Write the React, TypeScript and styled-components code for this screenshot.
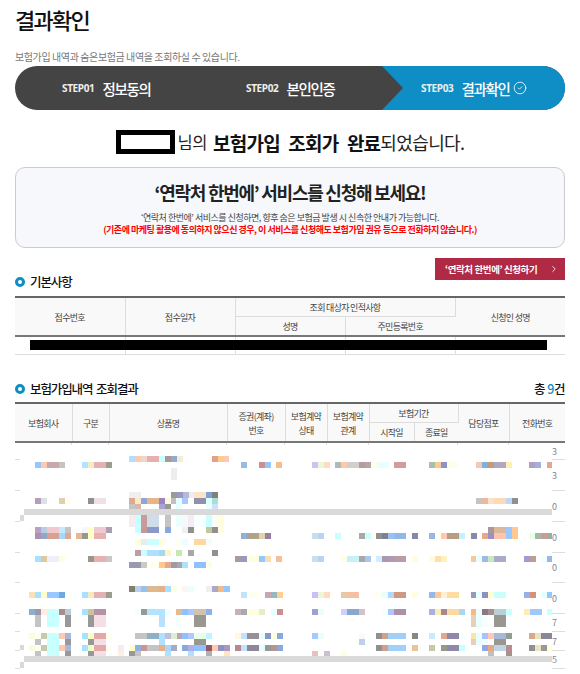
import React from 'react'
import styled, { createGlobalStyle } from 'styled-components'
import { CircleCheck, ChevronRight } from 'lucide-react'

const GlobalStyle = createGlobalStyle`
  html, body {
    margin: 0;
    padding: 0;
    background: #fff;
    overflow: hidden;
  }
  body {
    font-family: "Noto Sans CJK KR", "Noto Sans", sans-serif;
    color: #222;
  }
`

const Page = styled.div`
  width: 550px;
  height: 674px;
  padding: 0 15px;
  overflow: hidden;
`

const Title = styled.h1`
  margin: 0;
  padding-top: 4px;
  height: 45px;
  box-sizing: border-box;
  font-size: 22px;
  line-height: 30px;
  font-weight: 500;
  letter-spacing: -1.7px;
  color: #111;
`

const Subtitle = styled.p`
  margin: 0;
  height: 21px;
  padding-top: 2px;
  box-sizing: border-box;
  font-size: 10px;
  line-height: 20px;
  letter-spacing: -0.4px;
  color: #777;
`

const StepBar = styled.div`
  display: flex;
  height: 44px;
  border-radius: 22px;
  overflow: hidden;
  background: #444;
  color: #fff;
`

const Step = styled.div<{ $width: number; $pad: number; $active?: boolean }>`
  position: relative;
  display: flex;
  align-items: center;
  gap: 8px;
  box-sizing: border-box;
  width: ${({ $width }) => $width}px;
  padding-left: ${({ $pad }) => $pad}px;
  background: ${({ $active }) => ($active ? '#0f8dc5' : 'transparent')};

  ${({ $active }) =>
    $active &&
    `
    &::before {
      content: '';
      position: absolute;
      left: 0;
      top: 0;
      border-left: 21px solid #444;
      border-top: 22px solid transparent;
      border-bottom: 22px solid transparent;
    }
  `}
`

const StepNo = styled.span`
  font-family: "Noto Sans", sans-serif;
  font-size: 10px;
  font-weight: 700;
  letter-spacing: -0.35px;
  color: #eee;
`

const StepName = styled.span`
  font-size: 14.5px;
  font-weight: 500;
  letter-spacing: -1.3px;
`

const StepIcon = styled(CircleCheck)`
  margin-left: -5px;
`

const Notice = styled.div`
  display: flex;
  align-items: center;
  justify-content: center;
  box-sizing: border-box;
  height: 57px;
  padding-top: 7px;
  font-size: 18px;
  letter-spacing: -0.6px;
  color: #222;
`

const Redacted = styled.span`
  display: inline-block;
  box-sizing: border-box;
  width: 59px;
  height: 24px;
  margin-right: 3px;
  background: #fff;
  border: 5px solid #000;
`

const Possessive = styled.span`
  font-size: 16.5px;
  letter-spacing: -0.4px;
  margin-right: 6px;
`

const Strong = styled.b`
  font-size: 19px;
  font-weight: 700;
  letter-spacing: -0.8px;
  word-spacing: 5px;
  color: #111;
`

const PromoBox = styled.div`
  box-sizing: border-box;
  height: 81px;
  border: 1px solid #ccc;
  border-radius: 10px;
  background: #f7f8fc;
  text-align: center;
  padding-top: 10px;
`

const PromoTitle = styled.div`
  font-size: 18px;
  line-height: 28px;
  font-weight: 700;
  letter-spacing: -1.25px;
  color: #222;
`

const PromoText = styled.div`
  margin-top: 6px;
  font-size: 9px;
  line-height: 12px;
  letter-spacing: -0.48px;
  color: #444;
`

const PromoWarn = styled(PromoText)`
  margin-top: 0;
  font-weight: 700;
  letter-spacing: -0.49px;
  color: #f00;
`

const ApplyRow = styled.div`
  display: flex;
  justify-content: flex-end;
  margin-top: 10px;
  height: 22px;
`

const ApplyButton = styled.button`
  display: flex;
  align-items: center;
  width: 130px;
  height: 22px;
  padding: 0 0 0 10px;
  border: 0;
  background: #b02a45;
  color: #fff;
  font-family: inherit;
  font-size: 9.5px;
  font-weight: 700;
  letter-spacing: -0.4px;
  white-space: nowrap;
`

const ApplyArrow = styled(ChevronRight)`
  margin-left: auto;
  margin-right: 6px;
`

const SectionHead = styled.div<{ $gap: number; $height: number }>`
  display: flex;
  align-items: center;
  justify-content: space-between;
  margin-top: ${({ $gap }) => $gap}px;
  height: ${({ $height }) => $height}px;
`

const SectionTitle = styled.h2`
  display: flex;
  align-items: center;
  gap: 5px;
  margin: 0;
  font-size: 12.5px;
  font-weight: 500;
  letter-spacing: -1.1px;
  word-spacing: 2px;
  color: #111;
`

const Ring = styled.i`
  display: block;
  box-sizing: border-box;
  width: 10px;
  height: 10px;
  border: 3px solid #0f8dc5;
  border-radius: 50%;
`

const Total = styled.span`
  font-size: 12.5px;
  font-weight: 500;
  letter-spacing: -0.5px;
  color: #111;
  b {
    font-weight: 500;
    color: #0f8dc5;
  }
`

const Table = styled.table<{ $gap?: number }>`
  width: 550px;
  margin-top: ${({ $gap }) => $gap ?? 0}px;
  table-layout: fixed;
  border-collapse: collapse;
  border-top: 2px solid #666;
`

const Th = styled.th<{ $end?: boolean }>`
  padding: 2px 0 0;
  background: #f9f9f9;
  border-right: 1px solid #ddd;
  border-bottom: ${({ $end }) => ($end ? '2px solid #777' : '1px solid #ddd')};
  font-size: 9px;
  line-height: 14px;
  font-weight: 400;
  letter-spacing: -0.7px;
  color: #444;
  &:last-child {
    border-right: 0;
  }
`

const HeadRow = styled.tr`
  height: 19px;
`

const HeadEndRow = styled.tr`
  height: 20px;
`

const DataRow = styled.tr`
  position: relative;
`

const Td = styled.td`
  height: 17px;
  padding: 0;
  border-right: 1px solid #ddd;
  border-bottom: 1px solid #ddd;
  &:last-child {
    border-right: 0;
  }
`

const BlackBar = styled.div`
  position: absolute;
  left: 15px;
  right: 18px;
  top: 4px;
  height: 10px;
  background: #000;
`

const Results = styled.div`
  position: relative;
  height: 231px;
`

const ColumnTicks = styled.div`
  position: absolute;
  left: 0;
  right: 0;
  top: 0;
  display: grid;
  grid-template-columns: 57px 37px 118px 58px 42px 42px 89px 51px 56px;
  height: 2px;
`

const Tick = styled.span`
  border-right: 1px solid #ddd;
  &:last-child {
    border-right: 0;
  }
`

const ResultRow = styled.div<{ $height: number }>`
  display: flex;
  justify-content: space-between;
  height: ${({ $height }) => $height}px;
`

const RowStart = styled.div`
  box-sizing: border-box;
  width: 5px;
  border-bottom: 1px solid #ddd;
`

const RowEnd = styled.div`
  box-sizing: border-box;
  width: 13px;
  display: flex;
  align-items: center;
  border-bottom: 1px solid #ddd;
  font-size: 9px;
  color: #8a8296;
  overflow: hidden;
`

const Mosaic = styled.svg`
  position: absolute;
  left: -15px;
  top: 0;
`

type Cell = [number, string, number?]
type Band = [number, number, Cell[]]

const bands: Band[] = [
  [456, 6, [[129, '#b0e0ff'], [135, '#ffc9b0'], [141, '#ecd8c8'], [147, '#e5b0b0', 12], [159, '#c8ffff'], [165, '#a89898'], [171, '#95a8d0'], [177, '#f0f0d8'], [212, '#dfa08c'], [218, '#ffcc90'], [224, '#ffc8b0', 5]]],
  [462, 6, [[35, '#90c8ff'], [41, '#ffc9b0'], [47, '#c8a8a8', 12], [59, '#c4c4c4'], [82, '#b0e4ff'], [88, '#f4ecc0'], [94, '#e5b0b0', 12], [106, '#9c9c90'], [241, '#98bce0'], [259, '#c89090'], [265, '#90c8ff'], [276, '#f5c088'], [312, '#c8c4f8'], [318, '#e8f8d8'], [324, '#ffdcc0'], [335, '#b0b8b8'], [341, '#ffc8a8'], [347, '#d0d0d0', 12], [359, '#b89c9c'], [365, '#b0a8a8'], [371, '#ffffe8'], [377, '#e8ffff', 12], [394, '#d09c9c', 12], [429, '#a8c0a8'], [435, '#ffc890'], [441, '#9090c8'], [447, '#ffffe8', 11], [476, '#f0ccb8'], [482, '#80b0e0'], [488, '#c09c78'], [494, '#b0a8c0', 12], [506, '#fff0b0'], [529, '#b0a0c0'], [535, '#a0b0e0'], [547, '#e0a890', 5]]],
  [468, 12, [[171, '#eeecf0']]],
  [492, 6, [[129, '#f0eef0', 12], [171, '#9a9a9a'], [177, '#9898cc'], [183, '#b8b8d0'], [189, '#f0ecf4'], [194, '#fbe4c8', 12], [206, '#80a0d8'], [212, '#808080']]],
  [498, 6, [[35, '#b89cc0'], [41, '#d8e4e0'], [59, '#e0d0b0'], [65, '#fffcf0'], [88, '#909090'], [94, '#f0e0e4', 12], [129, '#dfa890'], [135, '#f4ecc8'], [141, '#90a4d8'], [147, '#e8b488', 12], [159, '#9c84c0'], [165, '#fff8e0'], [171, '#c0c0c0'], [176, '#e8ffff'], [182, '#a8c8ff'], [194, '#9090a8', 12], [206, '#e0ffff'], [212, '#a8e0d8'], [476, '#c4c4c4'], [482, '#e8b8a0'], [488, '#fbe0c8'], [494, '#ffd8b8', 12], [506, '#b8d8f8'], [512, '#909090']]],
  [504, 6, [[129, '#c4c4c4'], [135, '#d8b8a8'], [159, '#a8a4d0'], [165, '#989898'], [176, '#e4ffff'], [206, '#e8ffff'], [212, '#d0e0f8']]],
  [515, 12, [[129, '#f4ecf0'], [135, '#c8ffff'], [141, '#c89c9c'], [147, '#d0dce8', 12], [165, '#c4c4c4'], [176, '#ecffff'], [182, '#f4f8ff'], [188, '#f4ecf0'], [194, '#f8ffff', 12], [206, '#c8ffff'], [212, '#fcfcf8'], [218, '#ffffe0']]],
  [527, 6, [[29, '#fffdf4'], [35, '#b8a0c8'], [41, '#b8cce0'], [47, '#f0c8d0', 12], [59, '#c8e8ff'], [65, '#c4c4c4'], [82, '#f8f8fc'], [88, '#ffffc8'], [94, '#f0c8d0', 12], [106, '#a8a0b0'], [135, '#c8ffff'], [141, '#c89898'], [147, '#8c98c8', 12], [165, '#88a8e0'], [182, '#f0f0f0'], [188, '#909090'], [206, '#c0c8a0'], [212, '#909090'], [218, '#ffffe0'], [488, '#a89898'], [494, '#dcb898', 12], [506, '#98c8ff'], [512, '#ffc890']]],
  [533, 6, [[35, '#b090b0'], [41, '#90a8c8'], [47, '#d8a090', 12], [59, '#a0d8ff'], [65, '#e0a890'], [76, '#e0bc90'], [82, '#989890'], [88, '#ffffc8'], [94, '#e8b0b0', 12], [241, '#90b0d8'], [247, '#b0a488', 12], [259, '#e0d4b0'], [265, '#9880a0'], [312, '#c8e0e8'], [318, '#b8d4f0'], [335, '#c8ffff'], [359, '#a8a8a8'], [365, '#c8ffff'], [371, '#fffff0'], [376, '#909090'], [382, '#808090'], [388, '#98c0f0'], [394, '#90b8e8', 12], [412, '#8888a8'], [429, '#98b8e0'], [435, '#fffff0'], [441, '#ffc8b0'], [447, '#b89c84', 12], [459, '#c0f4ff'], [471, '#8888a8'], [482, '#e8a888'], [488, '#9890c8'], [494, '#ffc4b0', 12], [506, '#98c8ff'], [512, '#ffc890'], [529, '#e8ffe8'], [535, '#a8b8a8'], [541, '#c89c98'], [547, '#98b0a0', 5]]],
  [539, 6, [[135, '#ffffd8'], [141, '#e8ecf0'], [147, '#c8ffff', 12], [159, '#ffffe0'], [176, '#fffff0'], [182, '#e8ffff'], [194, '#ffd8a0', 12], [206, '#f0fff8']]],
  [550, 6, [[135, '#c09ca8'], [141, '#c8ffff'], [147, '#b0e0ff', 12], [159, '#a8d8f0'], [165, '#fff4c8'], [176, '#c8e8b0'], [188, '#a8a8a8'], [212, '#909090']]],
  [556, 6, [[35, '#a8e0ff'], [41, '#e0c89c'], [47, '#f0eef8', 12], [59, '#ffffe0'], [88, '#989888'], [94, '#e8b0b0', 12], [106, '#c8c8c8'], [235, '#a898a8'], [241, '#9898c0'], [247, '#ffffe0', 12], [259, '#90c8ff'], [265, '#ffdca8'], [276, '#f5c098'], [312, '#c8e0e8'], [318, '#b8d4f0'], [341, '#ffffe8'], [347, '#c8f0f8', 12], [359, '#a8a8a8'], [365, '#a8c8f0'], [376, '#d0eeff'], [382, '#a898b0'], [388, '#b098b8'], [394, '#b89ca8', 12], [412, '#fffde0'], [429, '#fffde0'], [435, '#ffe0a8'], [441, '#fff0c0'], [471, '#f8c898'], [476, '#e8ffff'], [482, '#a0b8e8'], [488, '#c8e8c0'], [494, '#a8acc8', 12], [524, '#9c9cd8'], [530, '#c09c98'], [541, '#f0ffff'], [547, '#98b8e8', 5]]],
  [562, 6, [[129, '#9898b8'], [135, '#989ca8'], [141, '#d0c8c8'], [147, '#fffff0', 12], [159, '#ffc88c'], [165, '#e8a890'], [171, '#989ca8'], [177, '#a8a8a8'], [182, '#b0e0ff'], [194, '#90c0ff', 12], [206, '#ffffe0']]],
  [586, 6, [[129, '#808070'], [135, '#b8d0f0'], [141, '#98c0e8'], [147, '#e0b890', 12], [159, '#e8b088'], [165, '#a8e0ff'], [171, '#ffffe0'], [182, '#fff4f4'], [188, '#e8ffff'], [206, '#f0eef4'], [212, '#a8a8c8'], [218, '#f5b888'], [224, '#90c8ff']]],
  [592, 6, [[29, '#fbe0b8'], [35, '#a8e0ff'], [41, '#ffffc8'], [47, '#98c8ff', 12], [59, '#70a8e0'], [82, '#a8e0ff'], [88, '#f4ecc0'], [94, '#e5b0b0', 12], [106, '#9c9c90'], [241, '#c0e4ff'], [247, '#fffff0', 12], [265, '#c8a8b0'], [271, '#98b8c0'], [277, '#ffd090'], [312, '#c8c0f8'], [318, '#e8f8d8'], [324, '#ffdcc0'], [341, '#e8c8a8'], [347, '#f5c0a0', 12], [376, '#fffff0'], [382, '#e8ffff'], [388, '#b0d8ff'], [394, '#d09880', 12], [412, '#ffffe0'], [429, '#98b8e8'], [435, '#ffc898'], [441, '#fff0d0'], [447, '#ffdca0', 12], [471, '#9898b8'], [476, '#e8ffff'], [482, '#9090c0'], [488, '#ffffd0'], [494, '#c8ffff', 12], [524, '#98b0e8'], [530, '#d89078'], [541, '#e8ffff'], [547, '#90c8ff', 5]]],
  [609, 6, [[29, '#88b0d0'], [35, '#a098a8'], [41, '#ffece0'], [47, '#c8ffff', 12], [59, '#a88c8c'], [65, '#b8ccd8'], [82, '#a8e0ff'], [88, '#c8c49c'], [94, '#b890a8', 12], [135, '#f4ffff'], [141, '#989898'], [147, '#b0e4ff', 18], [165, '#f4ffff'], [176, '#e8b890'], [182, '#90c0ff'], [188, '#a8c8ff'], [194, '#d0c4b0', 12], [206, '#90b0f0'], [235, '#c8b0b8'], [241, '#a8a8b0'], [247, '#ffffe0', 12], [259, '#e8ecc8'], [271, '#e8ffff'], [277, '#c89090'], [312, '#a0a0d0'], [318, '#e8ffff'], [341, '#d0d0ff'], [347, '#88a8d0', 12], [359, '#d8c0c8'], [382, '#f4ffff'], [388, '#a8c8ff'], [394, '#b090a8', 12], [429, '#a8b0e8'], [435, '#ffecb0'], [441, '#a88890'], [447, '#ffd8a0', 12], [459, '#a8d8f0'], [471, '#f8b880'], [476, '#e8ffff'], [482, '#887888'], [488, '#a89090'], [494, '#b8d0d8', 12], [506, '#c8ffff'], [524, '#ffecb0'], [530, '#a0c8ff', 12], [547, '#c8ffff', 5]]],
  [615, 12, [[35, '#c4c4c4'], [47, '#c8ffff', 12], [65, '#989898'], [88, '#989898'], [94, '#f4e0e4', 12], [159, '#b8e0ff'], [176, '#f4ffff'], [194, '#989890', 12], [471, '#e8d0b8'], [476, '#e8ffff'], [482, '#f4ffff'], [494, '#989890', 12]]],
  [633, 6, [[29, '#f8ffe0'], [35, '#fffff0'], [41, '#c8c8b0'], [47, '#c8ffff', 12], [59, '#ffc8b0'], [65, '#a8b8d8'], [82, '#a8e0ff'], [88, '#f4ffc8'], [94, '#e5a8a8', 12], [106, '#fffff0'], [135, '#c4c4c4', 12], [147, '#90b0c8', 12], [159, '#b0e0ff'], [165, '#c0c0d8'], [171, '#e0ecd8'], [177, '#b8a8a8'], [182, '#90c0ff'], [188, '#b0c8ff'], [194, '#e8ffe8', 12], [206, '#c0f4ff'], [235, '#fff8e0'], [241, '#c0e4ff'], [247, '#989098', 12], [259, '#e8fff8'], [265, '#8898c8'], [271, '#ffffe0'], [277, '#88a8e0'], [312, '#a8c8ff'], [318, '#e8ffff'], [359, '#fff8f8'], [376, '#909090'], [382, '#d0a088'], [388, '#a0d0f8', 18], [412, '#888880'], [429, '#c8ecff'], [441, '#e0a890'], [447, '#9088a8', 12], [459, '#f4ffff'], [471, '#ffe4a8'], [476, '#e8ffff'], [482, '#a8c0ff'], [488, '#ffc8b0'], [494, '#a8b8d8', 12], [506, '#90a090'], [529, '#d8a888'], [535, '#e8e4c0'], [541, '#888898', 11]]],
  [639, 6, [[35, '#c4c4c4'], [47, '#c8ffff', 12], [65, '#989898'], [88, '#989898'], [94, '#f4e0e4', 12], [159, '#b0e0ff'], [194, '#989890', 12], [359, '#c0d0e8'], [471, '#e8d0b8'], [476, '#e8ffff'], [482, '#f4ffff'], [494, '#989890', 12]]],
  [645, 6, [[29, '#f8ffe0'], [35, '#fffff0'], [41, '#c8c8b0'], [47, '#c8ffff', 12], [59, '#ffc8b0'], [65, '#a8b8d8'], [82, '#a8e0ff'], [88, '#f4ffc8'], [94, '#e5a8a8', 12], [106, '#fffff0'], [118, '#f4ecf0'], [129, '#ffffc8'], [135, '#90b0e0'], [141, '#c89890'], [147, '#c4c4c4', 12], [159, '#e8b088'], [165, '#a8d8ff'], [171, '#a8a8c8'], [182, '#88a8e0'], [188, '#b0b0e8'], [194, '#90c0ff', 12], [206, '#905868'], [212, '#ffc8b0'], [218, '#9090c0'], [224, '#a898c0'], [235, '#b88890'], [241, '#c0e4ff'], [247, '#8c8898', 12], [259, '#e8fff8'], [265, '#989898'], [271, '#b09890'], [277, '#88a8e0'], [376, '#909090'], [382, '#d0a088'], [388, '#a0d0f8', 18], [412, '#e8c498'], [429, '#c8c8a8'], [441, '#989888'], [447, '#9088a8', 12], [459, '#c8ffff'], [482, '#90a8e8'], [488, '#e8a888'], [494, '#c0d4e8', 12], [506, '#b88c90'], [529, '#909090'], [535, '#e8e4c0'], [541, '#989898'], [547, '#ffffd8', 5]]],
  [651, 5, [[35, '#c4c4c4'], [47, '#c8ffff', 12], [65, '#989898'], [88, '#989898'], [94, '#f4e0e4', 12], [118, '#fff0e0'], [129, '#989898'], [135, '#c4c4c4'], [165, '#b0e0ff'], [188, '#b0e0ff'], [206, '#b0b0b0'], [224, '#ffe4c8'], [312, '#e8c0c0'], [324, '#ccc0d0'], [341, '#fffde0'], [488, '#c0c0c0'], [506, '#a89090']]],
  [509, 6, [[24, '#d9d9d9', 528]]],
  [656, 6, [[24, '#d9d9d9', 528]]],
  [515, 6, [[20, '#d9d9d9', 4]]],
  [645, 5, [[20, '#d9d9d9', 4]]],
  [662, 6, [[20, '#d9d9d9', 4]]]
]

const rows: [number, string][] = [
  [17, '3'],
  [31, '3'],
  [31, '0'],
  [31, '0'],
  [30, '0'],
  [31, '0'],
  [18, '7'],
  [19, '7'],
  [18, '5']
]

export default function App() {
  return (
    <Page>
      <GlobalStyle />
      <Title>결과확인</Title>
      <Subtitle>보험가입 내역과 숨은보험금 내역을 조회하실 수 있습니다.</Subtitle>

      <StepBar>
        <Step $width={184} $pad={47}>
          <StepNo>STEP01</StepNo>
          <StepName>정보동의</StepName>
        </Step>
        <Step $width={183} $pad={47}>
          <StepNo>STEP02</StepNo>
          <StepName>본인인증</StepName>
        </Step>
        <Step $width={183} $pad={39} $active>
          <StepNo>STEP03</StepNo>
          <StepName>결과확인</StepName>
          <StepIcon size={14} strokeWidth={1.4} />
        </Step>
      </StepBar>

      <Notice>
        <Redacted />
        <Possessive>님의</Possessive>
        <Strong>보험가입 조회가 완료</Strong>되었습니다.
      </Notice>

      <PromoBox>
        <PromoTitle>‘연락처 한번에’ 서비스를 신청해 보세요!</PromoTitle>
        <PromoText>‘연락처 한번에’ 서비스를 신청하면, 향후 숨은 보험금 발생 시 신속한 안내가 가능합니다.</PromoText>
        <PromoWarn>(기존에 마케팅 활용에 동의하지 않으신 경우, 이 서비스를 신청해도 보험가입 권유 등으로 전화하지 않습니다.)</PromoWarn>
      </PromoBox>

      <ApplyRow>
        <ApplyButton>
          ‘연락처 한번에’ 신청하기
          <ApplyArrow size={10} strokeWidth={2} />
        </ApplyButton>
      </ApplyRow>

      <SectionHead $gap={-9} $height={21}>
        <SectionTitle>
          <Ring />
          기본사항
        </SectionTitle>
      </SectionHead>

      <Table $gap={4}>
        <colgroup>
          <col width={110} />
          <col width={110} />
          <col width={110} />
          <col width={110} />
          <col width={110} />
        </colgroup>
        <thead>
          <HeadRow>
            <Th rowSpan={2} $end>접수번호</Th>
            <Th rowSpan={2} $end>접수일자</Th>
            <Th colSpan={2}>조회 대상자 인적사항</Th>
            <Th rowSpan={2} $end>신청인 성명</Th>
          </HeadRow>
          <HeadEndRow>
            <Th $end>성명</Th>
            <Th $end>주민등록번호</Th>
          </HeadEndRow>
        </thead>
        <tbody>
          <DataRow>
            <Td />
            <Td />
            <Td />
            <Td />
            <Td>
              <BlackBar />
            </Td>
          </DataRow>
        </tbody>
      </Table>

      <SectionHead $gap={20} $height={27}>
        <SectionTitle>
          <Ring />
          보험가입내역 조회결과
        </SectionTitle>
        <Total>
          총 <b>9</b>건
        </Total>
      </SectionHead>

      <Table>
        <colgroup>
          <col width={57} />
          <col width={37} />
          <col width={118} />
          <col width={58} />
          <col width={42} />
          <col width={42} />
          <col width={45} />
          <col width={44} />
          <col width={51} />
          <col width={56} />
        </colgroup>
        <thead>
          <HeadRow>
            <Th rowSpan={2} $end>보험회사</Th>
            <Th rowSpan={2} $end>구분</Th>
            <Th rowSpan={2} $end>상품명</Th>
            <Th rowSpan={2} $end>증권(계좌)<br />번호</Th>
            <Th rowSpan={2} $end>보험계약<br />상태</Th>
            <Th rowSpan={2} $end>보험계약<br />관계</Th>
            <Th colSpan={2}>보험기간</Th>
            <Th rowSpan={2} $end>담당점포</Th>
            <Th rowSpan={2} $end>전화번호</Th>
          </HeadRow>
          <HeadEndRow>
            <Th $end>시작일</Th>
            <Th $end>종료일</Th>
          </HeadEndRow>
        </thead>
      </Table>

      <Results>
        <ColumnTicks>
          {Array.from({ length: 9 }).map((_, i) => (
            <Tick key={i} />
          ))}
        </ColumnTicks>
        {rows.map(([height, digit], i) => (
          <ResultRow key={i} $height={height}>
            <RowStart />
            <RowEnd>{digit}</RowEnd>
          </ResultRow>
        ))}
        <Mosaic width={580} height={231} viewBox="0 443 580 231" shapeRendering="crispEdges">
          {bands.map(([y, h, cells]) =>
            cells.map(([x, fill, w]) => (
              <rect key={`${y}-${x}`} x={x} y={y} width={w ?? 6} height={h} fill={fill} />
            ))
          )}
        </Mosaic>
      </Results>
    </Page>
  )
}
